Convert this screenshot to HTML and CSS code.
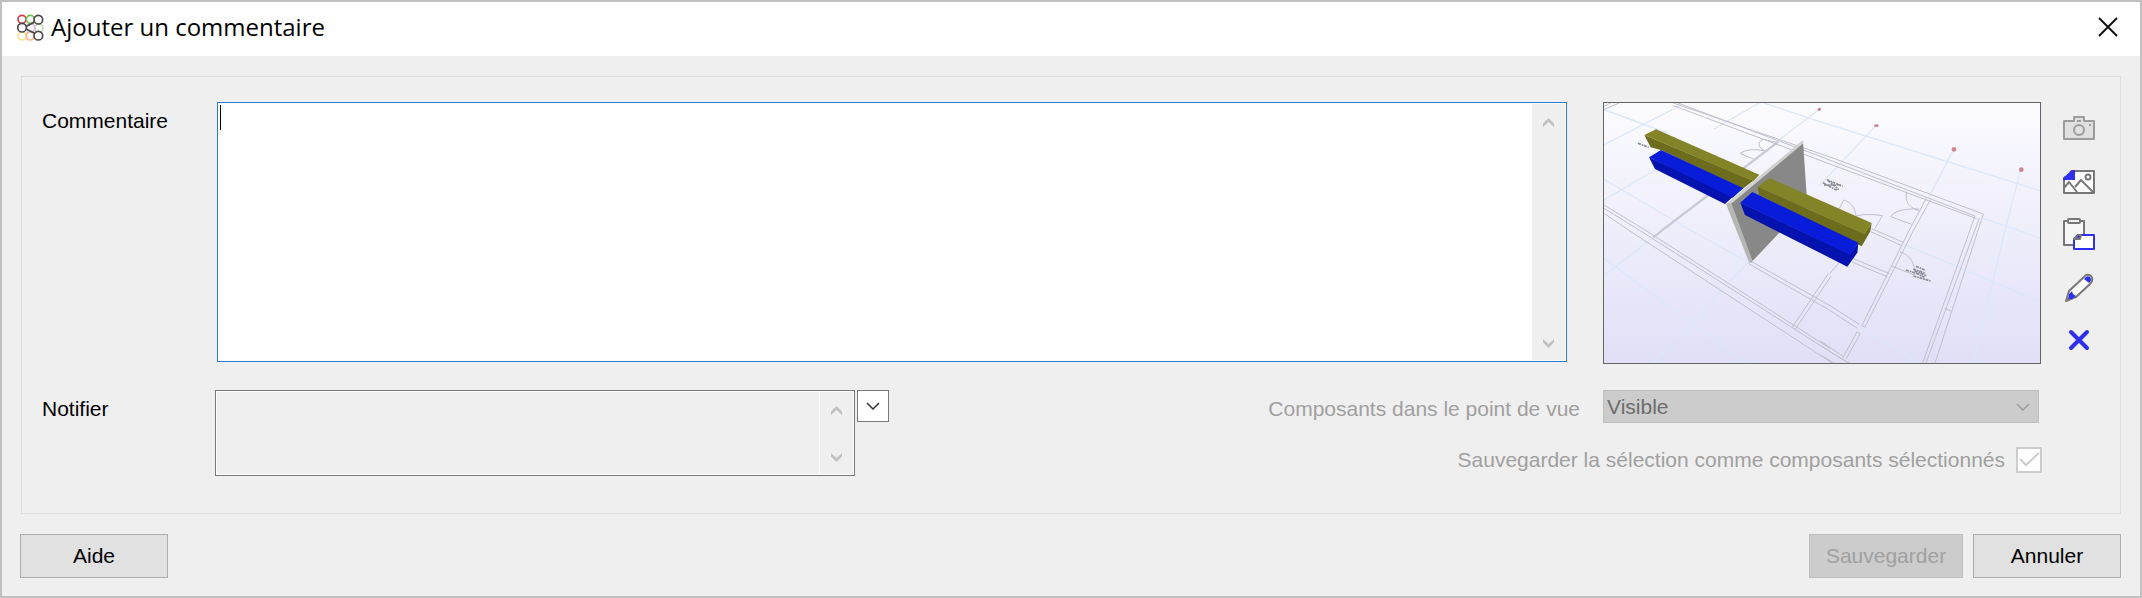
FILE: index.html
```html
<!DOCTYPE html>
<html lang="fr">
<head>
<meta charset="utf-8">
<title>Ajouter un commentaire</title>
<link rel="stylesheet" href="styles.css">
</head>
<body>
<form class="dialog">
  <header class="titlebar">
    <svg class="logo" viewBox="50 40 81 81" fill="none" stroke-width="5" aria-hidden="true">
      <circle cx="65" cy="106" r="12" stroke="#fbe58c"/>
      <circle cx="90" cy="106" r="12" stroke="#f6b48c"/>
      <circle cx="116" cy="82" r="12" stroke="#bfe0a8"/>
      <circle cx="91" cy="81" r="12" stroke="#d9b8e6"/>
      <circle cx="65" cy="56" r="12" stroke="#d8344c"/>
      <circle cx="90" cy="56" r="12" stroke="#6cbf50"/>
      <g fill="#fff" stroke="#484848"><circle cx="65" cy="81" r="13"/><circle cx="114" cy="57" r="13"/><circle cx="114" cy="105" r="13"/><path d="M78 77L102 65M78 86L102 97"/></g>
    </svg>
    <h1 class="title">Ajouter un commentaire</h1>
    <button class="close" type="button" aria-label="Fermer">
      <svg viewBox="0 0 20 20" width="20" height="20" stroke="#111" stroke-width="2"><path d="M1 1L19 19M19 1L1 19"/></svg>
    </button>
  </header>

  <main class="group">
    <section class="row">
      <label class="label" for="comment">Commentaire</label>
      <div class="editor">
        <textarea class="editor-text" id="comment"></textarea>
        <span class="caret"></span>
        <div class="scroll" aria-hidden="true">
          <svg viewBox="0 0 11 9" width="11" height="9"><path d="M0 5.500L5.500 0L11 5.500V9L5.500 4L0 9z"/></svg>
          <svg viewBox="0 0 11 9" width="11" height="9"><path d="M0 3.500L5.500 9L11 3.500V0L5.500 5L0 0z"/></svg>
        </div>
      </div>
      <div class="preview">
        <svg class="scene" viewBox="0 0 1308 780" preserveAspectRatio="xMidYMid slice" role="img" aria-label="Point de vue">
          <defs><linearGradient id="sky" x1="0" y1="0" x2="0" y2="1"><stop offset="0" stop-color="#fbfbff"/><stop offset="1" stop-color="#e1dff6"/></linearGradient></defs>
          <rect width="1308" height="780" fill="url(#sky)"/>
          <g fill="none" stroke="#dbe7fa" stroke-width="4">
            <path d="M0 125L228 8M0 20L190 90M465 0L330 78M480 0L648 56L1308 263M1138 346L1308 405M898 423L1308 596M816 68L648 246M1048 141L973 286M1250 201L1203 381L1108 780M646 19L518 116M0 229L258 381L433 478M0 291L240 150M0 466L424 780M433 478L145 780M0 518L148 403M763 671L944 780"/>
          </g>
          <g fill="none" stroke="#c6cbd6" stroke-width="7"><path d="M523 116L178 379L148 403"/></g>
          <g fill="none" stroke="#c0c0ca" stroke-width="3">
            <path d="M208 0L678 162L1138 333L993 780M222 0L648 160L1113 339L956 780M208 8L648 172L1118 347M1126 345L966 780M1021 616L1041 624"/>
            <path d="M0 306L123 381L678 736M0 316L110 384L678 746L735 780M0 331L73 381L684 780M0 20L45 0M0 10L20 0"/>
            <path d="M440 474L678 608L766 664M434 482L674 620L760 676M681 520L574 678M673 512L565 672M708 475L678 512"/>
            <path d="M748 467L857 512M744 477L850 521M803 377L900 419M800 386L894 428M967 286L918 377L849 516L774 667M980 289L926 387L859 520L782 673L774 667M759 686L716 766M769 692L726 768M759 686L769 692M648 713L720 762M648 726L716 770M648 756L692 780"/>
            <path d="M518 118L478 109C458 116 463 136 483 144C448 136 423 141 408 151L448 168"/>
            <path d="M908 266C900 300 920 315 945 323M945 318C898 316 868 326 860 341L923 364M700 326L720 291C748 301 753 321 756 339C778 333 808 333 835 338L813 376M888 446C928 461 933 491 931 516L863 489"/>
          </g>
          <g fill="none" stroke="#8a8a92" stroke-width="5" stroke-dasharray="9 3 5 2">
            <path d="M657 239L698 262M668 230L716 250M672 232L704 260M660 246L712 246M102 121L134 133M906 501L945 514M936 490L965 502M932 504L968 518M928 519L980 534M928 498L962 510M936 511L964 524"/>
          </g>
          <g fill="#cf8490"><circle cx="646" cy="19" r="5"/><ellipse cx="817" cy="68" rx="7" ry="4"/><circle cx="1050" cy="139" r="7"/><circle cx="1252" cy="200" r="7"/></g>
          <path fill="#6c6c1c" d="M121 96L448 233L416 257L171 141L140 133z"/>
          <path fill="#828427" d="M121 96L156 79L466 215L448 235z"/>
          <path fill="#0413ad" d="M135 163L390 278L363 303L153 198z"/>
          <path fill="#081cda" d="M135 163L171 141L418 256L386 284z"/>
          <path fill="#888" d="M597 115L608 276L608 310L526 389L440 480L373 302z"/>
          <path fill="#d0d1cf" d="M366 303L597 111L598 121L380 304z"/>
          <path fill="#b5b7b2" d="M366 303L382 300L446 474L436 480z"/>
          <path fill="#6c6c1c" d="M461 251L781 392L803 360L799 385L773 430L465 275z"/>
          <path fill="#828427" d="M461 251L496 225L803 360L781 394z"/>
          <path fill="#0413ad" d="M409 299L738 453L763 419L760 449L730 491L423 336z"/>
          <path fill="#081cda" d="M409 299L445 267L763 419L738 455z"/>
        </svg>
      </div>
      <nav class="tools">
        <button class="tool" type="button" disabled aria-label="Capturer">
          <svg viewBox="0 0 32 32" fill="none" stroke="#9c9c9c" stroke-width="2"><path fill="#e0e0e0" stroke-linejoin="round" d="M1 9H11V5H21V9H31V27H1z"/><path d="M14 9H18"/><circle cx="16" cy="18" r="5"/><path d="M26 13H28"/></svg>
        </button>
        <button class="tool" type="button" aria-label="Image">
          <svg viewBox="0 0 32 32" fill="none" stroke="#777" stroke-width="2"><path fill="#fff" stroke-linejoin="round" d="M1 6H31V28H1z"/><path d="M1 23L6 17L14 27M12 22L18 15L30 27"/><circle cx="25" cy="12" r="2.500"/><path fill="#efefef" stroke="none" d="M0 4H9L0 13z"/><path fill="#2f2ff0" stroke="none" d="M12 5V15H0V13L9 5z"/></svg>
        </button>
        <button class="tool" type="button" aria-label="Coller">
          <svg viewBox="0 0 32 32" fill="none" stroke="#777" stroke-width="2" stroke-linejoin="round"><path fill="#f6f6f6" d="M1 3H21V27H1z"/><rect x="5" y="1" width="12" height="4" rx="1" fill="#efefef"/><path fill="#fff" stroke="#2f2ff0" d="M11 21L15 17H31V31H11z"/><path fill="#2f2ff0" d="M11 21L15 17H18L17 21z"/></svg>
        </button>
        <button class="tool" type="button" aria-label="Modifier">
          <svg viewBox="0 0 32 32" fill="none" stroke="#777" stroke-width="2" stroke-linejoin="round"><path fill="#fff" d="M3 30L6 20L21 6Q24 2 28 5Q31 9 27 13L13 26z"/><path fill="#2f2ff0" stroke="none" d="M22 7Q24 4 27 6Q29 9 27 11L26 12L21 8zM9 20L10 23L13 25L9 28L5 28L6 23z"/></svg>
        </button>
        <button class="tool" type="button" aria-label="Supprimer">
          <svg viewBox="0 0 32 32" fill="none" stroke="#2f2ff0" stroke-width="4" stroke-linecap="round"><path d="M8 8L24 24M24 8L8 24"/></svg>
        </button>
      </nav>
    </section>

    <section class="row row-bottom">
      <label class="label label-notify" for="notify">Notifier</label>
      <div class="notify">
        <textarea class="notify-text" id="notify" readonly></textarea>
        <div class="scroll scroll-notify" aria-hidden="true">
          <svg viewBox="0 0 11 9" width="11" height="9"><path d="M0 5.500L5.500 0L11 5.500V9L5.500 4L0 9z"/></svg>
          <svg viewBox="0 0 11 9" width="11" height="9"><path d="M0 3.500L5.500 9L11 3.500V0L5.500 5L0 0z"/></svg>
        </div>
      </div>
      <button class="pick" type="button" aria-label="Choisir">
        <svg viewBox="0 0 14 8" width="14" height="8" fill="none" stroke="#333" stroke-width="1.500"><path d="M1 1L7 7L13 1"/></svg>
      </button>
      <div class="options">
        <div class="option option-view">
          <label for="view">Composants dans le point de vue</label>
          <div class="select-box">
            <select class="select" id="view" disabled><option>Visible</option></select>
            <svg class="chevron" viewBox="0 0 14 8" width="14" height="8" fill="none" stroke="#9e9e9e" stroke-width="1.500"><path d="M1 1L7 7L13 1"/></svg>
          </div>
        </div>
        <div class="option option-save">
          <label for="save">Sauvegarder la sélection comme composants sélectionnés</label>
          <div class="check-box">
            <input class="check" id="save" type="checkbox" checked disabled>
            <svg class="tick" viewBox="0 0 26 26" fill="none" stroke="#ccc" stroke-width="2"><path d="M4 12L10 18L23 6"/></svg>
          </div>
        </div>
      </div>
    </section>
  </main>

  <footer class="actions">
    <button class="button" type="button">Aide</button>
    <button class="button button-save" type="submit" disabled>Sauvegarder</button>
    <button class="button" type="button">Annuler</button>
  </footer>
</form>
</body>
</html>
```
FILE: styles.css
```css
* { box-sizing: border-box; }

body {
  margin: 0;
  font: 21px/24px "Liberation Sans", Arial, sans-serif;
  color: #000;
  background: #efefef;
}

button, select, textarea { font: inherit; color: inherit; }
button { padding: 0; border: 0; background: none; }
svg { display: block; }

.dialog {
  display: flex;
  flex-direction: column;
  min-height: 100vh;
  border: 2px solid #c0c0c0;
}

.titlebar {
  display: flex;
  align-items: center;
  gap: 7px;
  height: 54px;
  padding: 0 22px 4px 15px;
  background: #fff;
}
.logo { width: 27px; height: 27px; }
.title {
  flex: 1;
  margin: 0;
  font: 24px/32px "Open Sans", "Noto Sans", sans-serif;
}
.close { width: 20px; height: 20px; }

.group {
  margin: 20px 19px 0;
  padding: 25px 25px 37px 20px;
  border: 1px solid #dcdcdc;
}

.row { display: flex; align-items: flex-start; }
.label { width: 175px; padding-top: 7px; }

.editor {
  position: relative;
  display: flex;
  flex: 1;
  height: 260px;
  padding: 1px;
  border: 1px solid #2e7ad1;
  background: #fff;
}
.editor-text {
  flex: 1;
  padding: 2px;
  border: 0;
  outline: 0;
  resize: none;
  background: #fff;
}
.caret {
  position: absolute;
  top: 2px;
  left: 2px;
  width: 1px;
  height: 25px;
  background: #000;
}
.scroll {
  display: flex;
  flex-direction: column;
  align-items: center;
  justify-content: space-between;
  width: 33px;
  padding: 14px 0 12px;
  background: #efefef;
  fill: #c1c1c1;
}

.preview {
  width: 438px;
  height: 262px;
  margin: 0 22px 0 36px;
  border: 1px solid #646464;
}
.scene { width: 100%; height: 100%; }

.tools {
  display: flex;
  flex-direction: column;
  gap: 21px;
  padding-top: 10px;
}
.tool, .tool svg { width: 32px; height: 32px; }

.row-bottom { margin-top: 26px; }
.label-notify { width: 173px; }
.notify {
  display: flex;
  width: 640px;
  height: 86px;
  padding: 1px;
  border: 1px solid #7a7a7a;
  background: #fff;
}
.notify-text {
  flex: 1;
  border: 0;
  outline: 0;
  resize: none;
  background: #efefef;
}
.scroll-notify { margin-left: 1px; }
.pick {
  display: grid;
  place-items: center;
  width: 32px;
  height: 32px;
  margin-left: 2px;
  border: 1px solid #7a7a7a;
  background: #fff;
}

.options {
  flex: 1;
  display: flex;
  flex-direction: column;
  gap: 24px;
  padding-right: 53px;
  color: #a0a0a0;
}
.option {
  display: flex;
  align-items: center;
  justify-content: flex-end;
}
.option-view { gap: 23px; padding-right: 3px; }
.option-view label { padding-top: 4px; }
.option-save { gap: 11px; }
.select-box { position: relative; width: 436px; }
.select {
  display: block;
  appearance: none;
  width: 100%;
  height: 33px;
  padding: 0 3px;
  border: 1px solid #bfbfbf;
  border-radius: 0;
  background: #ccc;
  color: #6d6d6d;
  opacity: 1;
}
.chevron { position: absolute; top: 13px; right: 9px; }
.check-box { position: relative; width: 26px; height: 26px; }
.check {
  display: block;
  appearance: none;
  width: 26px;
  height: 26px;
  margin: 0;
  border: 2px solid #ccc;
  background: #fff;
}
.tick { position: absolute; inset: 0; }

.actions {
  display: flex;
  gap: 10px;
  padding: 20px 19px 18px 18px;
}
.button {
  width: 148px;
  height: 44px;
  border: 1px solid #adadad;
  background: #e1e1e1;
}
.button-save {
  width: 154px;
  margin-left: auto;
  border-color: #bfbfbf;
  background: #ccc;
  color: #a0a0a0;
}
```
